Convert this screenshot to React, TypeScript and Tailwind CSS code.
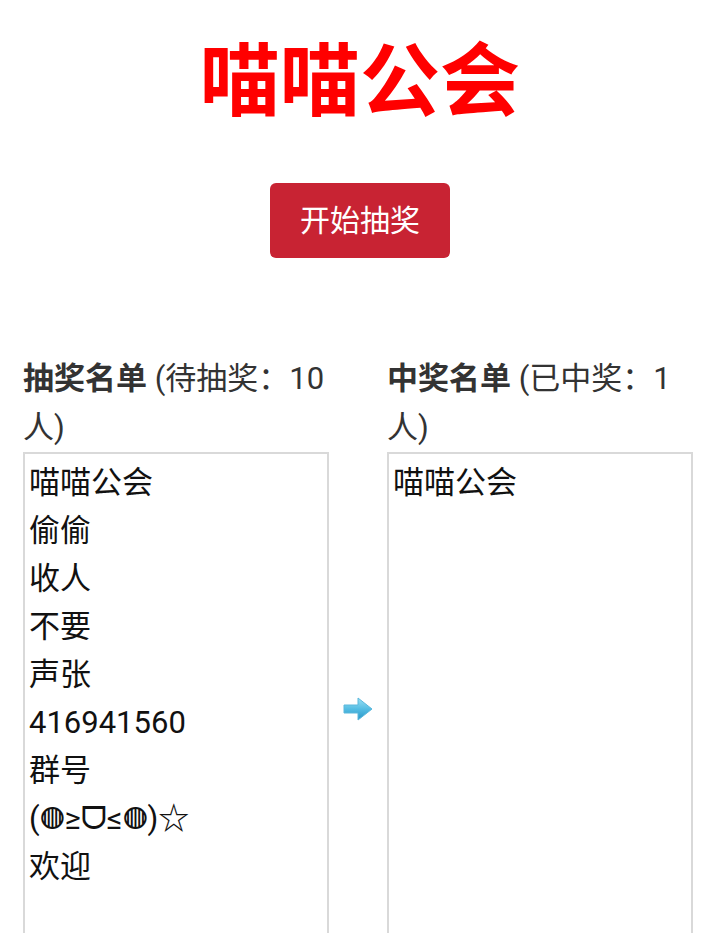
import React from "react";

const left = ["喵喵公会", "偷偷", "收人", "不要", "声张", "416941560", "群号", "(◍≥ᗜ≤◍)☆", "欢迎"];
const right = ["喵喵公会"];

function Arrow() {
  return (
    <svg width="34" height="28" viewBox="0 0 34 28">
      <defs>
        <linearGradient id="ag" x1="0" y1="0" x2="0" y2="1">
          <stop offset="0" stopColor="#9be0f4" />
          <stop offset="0.5" stopColor="#54bde3" />
          <stop offset="1" stopColor="#2a96c8" />
        </linearGradient>
      </defs>
      <path d="M3 10 H17 V3 L31 14 L17 25 V18 H3 Z" fill="url(#ag)" stroke="#5bb8dc" strokeWidth="1" strokeLinejoin="round" />
    </svg>
  );
}

export default function App() {
  return (
    <div className="min-h-[933px] bg-white" style={{ fontFamily: 'Roboto, "Noto Sans CJK SC", sans-serif' }}>
      <h1 className="pt-[34px] text-center text-[80px] font-bold leading-[96px] text-[#ff0000]">喵喵公会</h1>
      <div className="mt-[53px] flex justify-center">
        <button className="h-[75px] w-[180px] rounded-[6px] bg-[#c82333] text-[30px] text-white">开始抽奖</button>
      </div>
      <div className="mt-[96px] grid grid-cols-[306px_58px_306px] px-[23px]">
        <div className="w-[316px] text-[31px] leading-[49px] text-[#333]">
          <span className="font-bold">抽奖名单</span> (待抽奖：10 人)
        </div>
        <div />
        <div className="w-[316px] text-[31px] leading-[49px] text-[#333]">
          <span className="font-bold">中奖名单</span> (已中奖：1 人)
        </div>
        <div className="h-[514px] border-2 border-[#d9d9d9] px-[4px] pt-[5px] text-[31px] leading-[48px] text-[#111]">
          {left.map((t) => (
            <div key={t}>{t}</div>
          ))}
        </div>
        <div className="flex items-center justify-center">
          <Arrow />
        </div>
        <div className="h-[514px] border-2 border-[#d9d9d9] px-[4px] pt-[5px] text-[31px] leading-[48px] text-[#111]">
          {right.map((t) => (
            <div key={t}>{t}</div>
          ))}
        </div>
      </div>
    </div>
  );
}
